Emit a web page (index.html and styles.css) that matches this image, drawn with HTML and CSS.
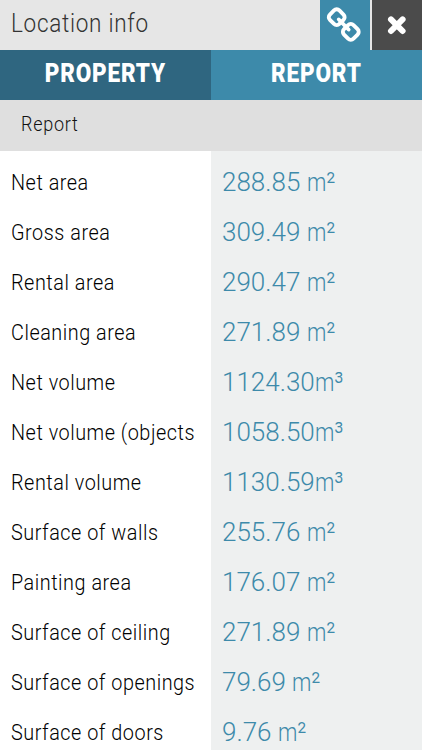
FILE: index.html
```html
<!DOCTYPE html>
<html lang="en">

<head>
    <meta charset="UTF-8">
    <meta name="viewport" content="width=device-width, initial-scale=1.0">
    <title>Location info</title>
    <link rel="stylesheet" href="styles.css">
</head>

<body>
    <header class="header">
        <h1 class="title"><span class="narrow">Location info</span></h1>
        <button class="icon-btn link-btn" aria-label="Link">
            <svg width="50" height="50" viewBox="0 0 50 50" fill="none" stroke="#fff" stroke-width="3.9" stroke-linecap="round">
                <rect x="10" y="10.5" width="13.4" height="13.4" rx="3.8" transform="rotate(45 16.7 17.2)" />
                <rect x="24.1" y="25.2" width="13.4" height="13.4" rx="3.8" transform="rotate(45 30.8 31.9)" />
                <path d="M18.8 19.5l9.8 10"/>
            </svg>
        </button>
        <button class="icon-btn close-btn" aria-label="Close">
            <svg width="20" height="20" viewBox="0 0 20 20" stroke="#fff" stroke-width="6" stroke-linecap="round">
                <path d="M4 4.4l11.6 11.6M15.6 4.4L4 16"/>
            </svg>
        </button>
    </header>
    <nav class="tabs">
        <a href="#" class="tab"><span class="narrow">PROPERTY</span></a>
        <a href="#" class="tab active"><span class="narrow">REPORT</span></a>
    </nav>
    <h2 class="section-title"><span class="narrow">Report</span></h2>
    <main class="table">
        <div class="row"><div class="label"><span class="narrow">Net area</span></div><div class="value">288.85 <span class="unit">m<span class="power">²</span></span></div></div>
        <div class="row"><div class="label"><span class="narrow">Gross area</span></div><div class="value">309.49 <span class="unit">m<span class="power">²</span></span></div></div>
        <div class="row"><div class="label"><span class="narrow">Rental area</span></div><div class="value">290.47 <span class="unit">m<span class="power">²</span></span></div></div>
        <div class="row"><div class="label"><span class="narrow">Cleaning area</span></div><div class="value">271.89 <span class="unit">m<span class="power">²</span></span></div></div>
        <div class="row"><div class="label"><span class="narrow">Net volume</span></div><div class="value">1124.30<span class="unit">m<span class="power">³</span></span></div></div>
        <div class="row"><div class="label"><span class="narrow">Net volume (objects</span></div><div class="value">1058.50<span class="unit">m<span class="power">³</span></span></div></div>
        <div class="row"><div class="label"><span class="narrow">Rental volume</span></div><div class="value">1130.59<span class="unit">m<span class="power">³</span></span></div></div>
        <div class="row"><div class="label"><span class="narrow">Surface of walls</span></div><div class="value">255.76 <span class="unit">m<span class="power">²</span></span></div></div>
        <div class="row"><div class="label"><span class="narrow">Painting area</span></div><div class="value">176.07 <span class="unit">m<span class="power">²</span></span></div></div>
        <div class="row"><div class="label"><span class="narrow">Surface of ceiling</span></div><div class="value">271.89 <span class="unit">m<span class="power">²</span></span></div></div>
        <div class="row"><div class="label"><span class="narrow">Surface of openings</span></div><div class="value">79.69 <span class="unit">m<span class="power">²</span></span></div></div>
        <div class="row"><div class="label"><span class="narrow">Surface of doors</span></div><div class="value">9.76 <span class="unit">m<span class="power">²</span></span></div></div>
    </main>
</body>

</html>
```
FILE: styles.css
```css
* {
    margin: 0;
    padding: 0;
    box-sizing: border-box;
}

body {
    height: 750px;
    background-color: #fff;
    font-family: Roboto, 'Liberation Sans', sans-serif;
}

/* condensed letters with open spacing */
.narrow {
    display: inline-block;
    letter-spacing: 0.6px;
    transform: scaleX(0.9);
    transform-origin: left;
}

.header {
    display: flex;
    height: 50px;
    background-color: #e6e6e6;
}
.title {
    flex: 1;
    padding-left: 11px;
    font-size: 25px;
    font-weight: 300;
    line-height: 48px;
    color: #333;
    white-space: nowrap;
}
.title .narrow {
    letter-spacing: 0.8px;
}
.icon-btn {
    display: flex;
    align-items: center;
    justify-content: center;
    border: none;
    height: 50px;
}
.link-btn {
    width: 50px;
    background-color: #3d8aaa;
}
.close-btn {
    width: 52px;
    border-left: 2px solid #e6e6e6;
    background-color: #4b4b4b;
}

.tabs {
    display: flex;
    height: 50px;
}
.tab {
    flex: 1;
    font-size: 25px;
    font-weight: 900;
    line-height: 48px;
    text-align: center;
    text-decoration: none;
    color: #fff;
    background-color: #2f6680;
}
.tab .narrow {
    letter-spacing: 0.9px;
    transform-origin: center;
}
.tab.active {
    background-color: #3d8aaa;
}

.section-title {
    height: 51px;
    padding-left: 21px;
    font-size: 20px;
    font-weight: 300;
    line-height: 49px;
    color: #111;
    background-color: #dfdfdf;
}
.section-title .narrow {
    letter-spacing: 0.8px;
}

.table {
    height: 599px;
    padding-top: 6px;
    overflow: hidden;
    background: linear-gradient(to right, #fff 211px, #eef0f0 211px);
}
.row {
    display: grid;
    grid-template-columns: 211px 211px;
    height: 50px;
}
.label {
    padding-left: 11px;
    overflow: hidden;
    white-space: nowrap;
    font-size: 22px;
    font-weight: 300;
    line-height: 51px;
    color: #000;
}
.value {
    padding-left: 11px;
    white-space: nowrap;
    font-size: 26px;
    font-weight: 300;
    line-height: 50px;
    color: #3d8aaa;
}
.unit {
    display: inline-block;
    transform: scaleX(0.84);
    transform-origin: left;
}
.power {
    font-size: 30px;
    font-weight: 300;
    line-height: 0;
    vertical-align: -2px;
}
```
